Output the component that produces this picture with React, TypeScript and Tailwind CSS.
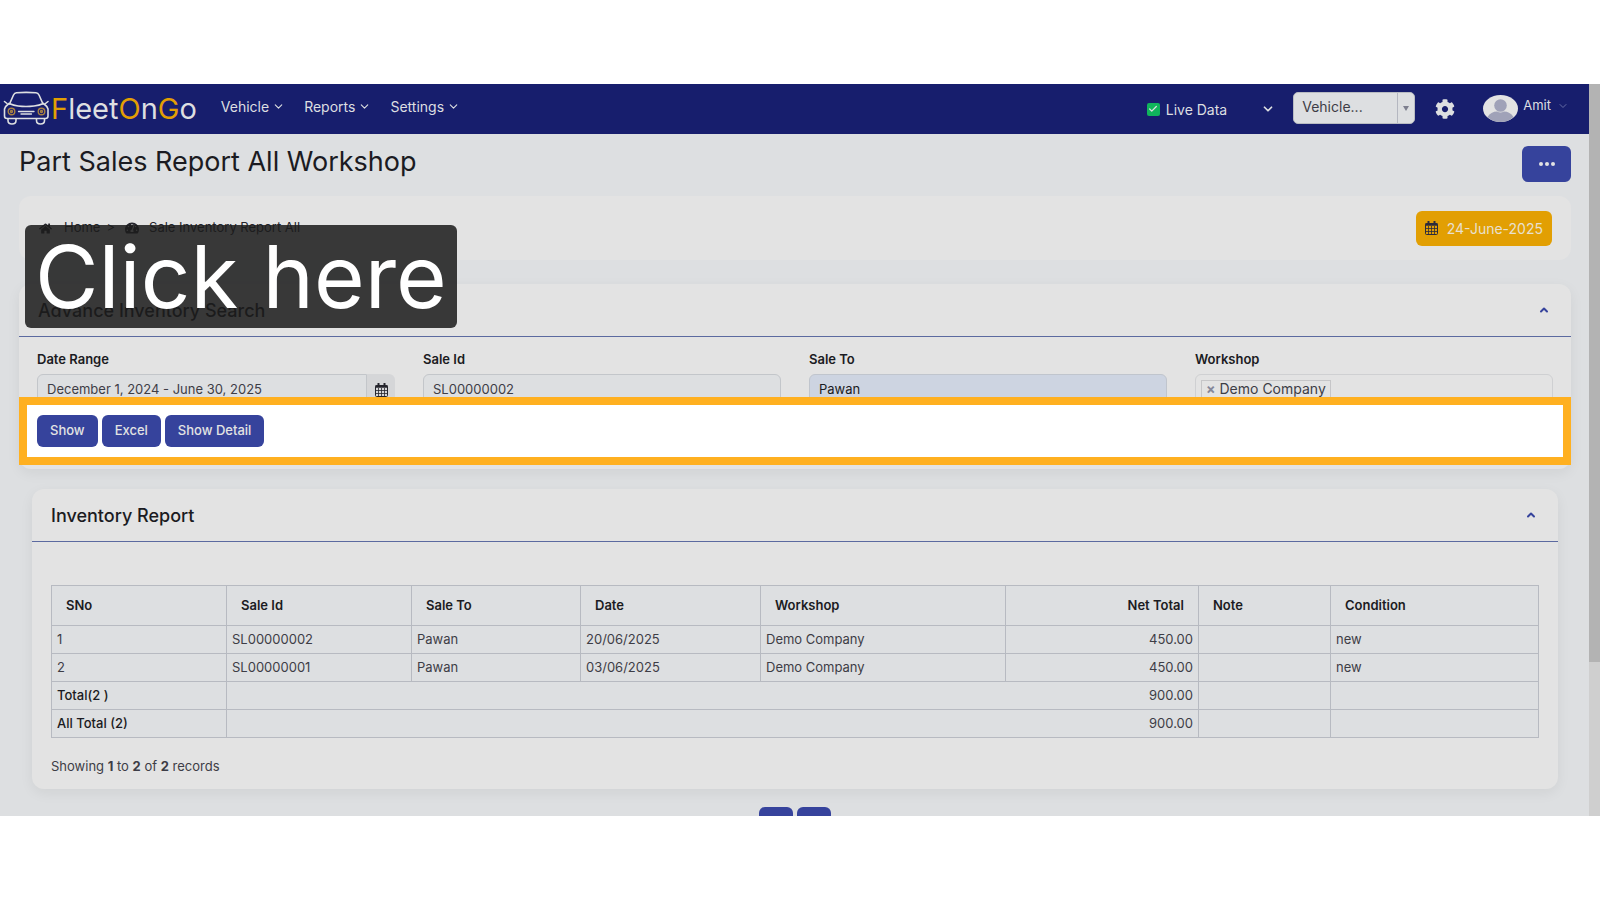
import type { ReactNode } from "react";
import { Check, ChevronDown, ChevronUp } from "lucide-react";
import { FaCog, FaHome, FaTachometerAlt } from "react-icons/fa";

type SaleRow = {
  sno: number;
  saleId: string;
  saleTo: string;
  date: string;
  workshop: string;
  netTotal: string;
  note: string;
  condition: string;
};

const rows: SaleRow[] = [
  { sno: 1, saleId: "SL00000002", saleTo: "Pawan", date: "20/06/2025", workshop: "Demo Company", netTotal: "450.00", note: "", condition: "new" },
  { sno: 2, saleId: "SL00000001", saleTo: "Pawan", date: "03/06/2025", workshop: "Demo Company", netTotal: "450.00", note: "", condition: "new" },
];

const totals = [
  { label: "Total(2 )", value: "900.00" },
  { label: "All Total (2)", value: "900.00" },
];

const columns = [
  { title: "SNo", className: "w-[175px] text-left" },
  { title: "Sale Id", className: "w-[185px] text-left" },
  { title: "Sale To", className: "w-[169px] text-left" },
  { title: "Date", className: "w-[180px] text-left" },
  { title: "Workshop", className: "w-[245px] text-left" },
  { title: "Net Total", className: "w-[193px] text-right" },
  { title: "Note", className: "w-[132px] text-left" },
  { title: "Condition", className: "text-left" },
];

const menus = ["Vehicle", "Reports", "Settings"];

export default function App() {
  return (
    <div className="flex h-screen flex-col bg-white py-[84px] font-['Inter',sans-serif] text-[13px] text-[#3d3d46]">
      <div className="flex min-h-0 flex-1">
        <div className="flex min-w-0 flex-1 flex-col overflow-hidden bg-[#dddfe1]">
          <Header />
          <main className="flex-1 pr-[18px] pl-[19px]">
            <div className="flex items-start justify-between pt-3">
              <h1 className="text-[27px] leading-8 text-[#1b1b22]">Part Sales Report All Workshop</h1>
              <button aria-label="More actions" className="flex h-9 w-[49px] items-center justify-center gap-[2px] rounded-md bg-[#36439c]">
                <i className="size-1 rounded-full bg-[#e3e3e3]" />
                <i className="size-1 rounded-full bg-[#e3e3e3]" />
                <i className="size-1 rounded-full bg-[#e3e3e3]" />
              </button>
            </div>
            <Breadcrumbs />
            <SearchPanel />
            <ReportPanel />
            <div className="mt-[18px] flex justify-center gap-1">
              <button aria-label="Previous page" className="h-8 w-[34px] rounded-md bg-[#36439c]" />
              <button aria-label="Next page" className="h-8 w-[34px] rounded-md bg-[#36439c]" />
            </div>
          </main>
        </div>
        <div className="w-[11px] bg-[#cfcfcf]">
          <div className="h-[79%] bg-[#b3b3b3]" />
        </div>
      </div>
    </div>
  );
}

function Header() {
  return (
    <header className="flex h-[50px] shrink-0 items-center bg-[#171e6d] pr-5 text-[#dddfe1]">
      <a href="#" className="flex items-center pl-[3px]">
        <CarLogo />
        <span className="text-[29px] leading-8">
          <span className="text-[#e29f03]">F</span>leet<span className="text-[#e29f03]">O</span>n<span className="text-[#e29f03]">G</span>o
        </span>
      </a>
      <nav className="ml-6 flex gap-[19px] pb-[6px]">
        {menus.map((menu) => (
          <button key={menu} className="flex items-center gap-[3px] text-[14px]">
            {menu}
            <ChevronDown size={13} strokeWidth={2} />
          </button>
        ))}
      </nav>
      <div className="ml-auto flex items-center pb-[2px]">
        <button className="flex items-center gap-[6px] pt-[2px] text-[14px]">
          <span className="flex size-[13px] items-center justify-center rounded-[2px] bg-[#10b45c]">
            <Check size={10} strokeWidth={3} />
          </span>
          Live Data
          <ChevronDown size={14} strokeWidth={3} className="ml-7" />
        </button>
        <button className="ml-[18px] flex h-8 w-[122px] items-stretch rounded-[5px] border border-[#b9bcc2] bg-[#dddfe1] text-[#3d3d46]">
          <span className="flex flex-1 items-center pb-1 pl-2 text-[14px]">Vehicle...</span>
          <span className="flex w-[17px] items-center justify-center border-l border-[#b4b7c0]">
            <i className="border-x-[3px] border-t-[5px] border-x-transparent border-t-[#7d7f8e]" />
          </span>
        </button>
        <button aria-label="Preferences" className="ml-5 pt-[2px]">
          <FaCog size={20} />
        </button>
        <button className="ml-7 flex items-center text-[13px]">
          <Avatar />
          <span className="ml-[5px] pb-1">Amit</span>
          <ChevronDown size={12} strokeWidth={2} className="mb-1 ml-[6px] text-[#666da5]" />
        </button>
      </div>
    </header>
  );
}

function CarLogo() {
  return (
    <svg width="48" height="36" viewBox="0 0 48 36" fill="none" stroke="#dddfe1" strokeWidth="1.6" strokeLinecap="round" strokeLinejoin="round">
      <path d="M6.500 13 10.500 4Q11.500 2 13.500 1.800Q23 1 33 1.800Q35 2 36 4L40 13" />
      <path d="M6 12.500Q11 14.500 15 15Q23 16 31 15Q36 14.500 40.500 12.500" />
      <path d="M6 12.500Q2.500 15 1.500 18V25Q1.500 27.500 4 27.500H42.500Q45 27.500 45 25V18Q44 15 40.500 12.500" />
      <path d="M4 12.500 1.500 10.500M42.500 12.500 45 10.500" />
      <path d="M5 28V29.500Q5 33 9 33Q13 33 13 29.500V28M33.500 28V29.500Q33.500 33 37.500 33Q41.500 33 41.500 29.500V28" />
      <path d="M15.500 20.500H31M18 23H28.500" strokeWidth="1.300" />
      <g stroke="#a98243" strokeWidth="1.400">
        <circle cx="8.500" cy="20.500" r="3.300" />
        <circle cx="8.500" cy="20.500" r="1" />
        <circle cx="38.500" cy="20.500" r="3.300" />
        <circle cx="38.500" cy="20.500" r="1" />
      </g>
    </svg>
  );
}

function Avatar() {
  return (
    <svg width="35" height="27" viewBox="0 0 35 27" className="overflow-hidden rounded-[50%]">
      <rect width="35" height="27" fill="#e3e3e3" />
      <circle cx="17.500" cy="10.500" r="6.300" fill="#a0a2b8" />
      <path d="M4.500 22Q8 16.500 14 16.500Q17.500 18.500 21 16.500Q27 16.500 30.500 22L24 27H11Z" fill="#a0a2b8" />
    </svg>
  );
}

function CalendarIcon({ className }: { className?: string }) {
  return (
    <svg width="13" height="14" viewBox="0 0 13 14" fill="none" stroke="currentColor" className={className}>
      <rect x="0.500" y="2.500" width="12" height="11" rx="1" />
      <path d="M0.500 3.500H12.500" strokeWidth="2.500" />
      <path d="M3.500 0.500V3M9.500 0.500V3" strokeWidth="2" strokeLinecap="round" />
      <path d="M3.500 5V13.500M6.500 5V13.500M9.500 5V13.500M0.500 7.500H12.500M0.500 10.500H12.500" strokeWidth="0.800" />
    </svg>
  );
}

function Breadcrumbs() {
  return (
    <div className="relative mt-[14px] flex h-16 items-center justify-between rounded-xl bg-[#e3e3e3] pr-[19px] pl-5">
      <nav className="flex items-center text-[13px] text-[#25252c]">
        <FaHome size={13} />
        <a href="#" className="ml-3">Home</a>
        <span className="mx-[6px]">&gt;</span>
        <FaTachometerAlt size={14} className="ml-1" />
        <a href="#" className="ml-[10px]">Sale Inventory Report All</a>
      </nav>
      <button className="flex h-[35px] items-center gap-[9px] rounded-md bg-[#e29f03] px-[9px] text-[14px] text-[#e8e0d0]">
        <CalendarIcon className="text-[#2b2b3c]" />
        24-June-2025
      </button>
      <div className="absolute top-[29px] left-[6px] z-20 rounded-md bg-[#1c1c1c]/86 px-[10px] text-[87px] leading-[103px] whitespace-nowrap text-white">
        Click here
      </div>
    </div>
  );
}

function PanelHeader({ title }: { title: string }) {
  return (
    <div className="flex h-[53px] items-center justify-between border-b border-[#5c6aa0] px-[19px]">
      <h2 className="text-[18px] font-medium text-[#1b1b22]">{title}</h2>
      <button aria-label={`Collapse ${title}`} className="pr-[2px] text-[#36439c]">
        <ChevronUp size={12} strokeWidth={4} />
      </button>
    </div>
  );
}

function Field({ id, label, children }: { id: string; label: string; children: ReactNode }) {
  return (
    <div>
      <label htmlFor={id} className="block leading-5 font-semibold text-[#1b1b22]">{label}</label>
      <div className="mt-[5px] flex h-[31px]">{children}</div>
    </div>
  );
}

function SearchPanel() {
  return (
    <section className="mt-6 rounded-xl bg-[#e3e3e3] pb-1 shadow-[0_4px_14px_rgba(0,0,0,0.06)]">
      <PanelHeader title="Advance Inventory Search" />
      <div className="grid grid-cols-4 gap-7 px-[18px] pt-3">
        <Field id="range" label="Date Range">
          <input id="range" defaultValue="December 1, 2024 - June 30, 2025" className="min-w-0 flex-1 rounded-l-md border border-[#c3c6ca] bg-[#dddfe1] px-[9px]" />
          <button aria-label="Open calendar" className="flex w-7 items-center justify-center rounded-r-md bg-[#d5d6d8] text-[#25252c]">
            <CalendarIcon />
          </button>
        </Field>
        <Field id="saleId" label="Sale Id">
          <input id="saleId" defaultValue="SL00000002" className="w-full rounded-md border border-[#c3c6ca] bg-[#dddfe1] px-[9px]" />
        </Field>
        <Field id="saleTo" label="Sale To">
          <input id="saleTo" defaultValue="Pawan" className="w-full rounded-md border border-[#c0c5cd] bg-[#cdd4e1] px-[9px] text-[#1b1b22]" />
        </Field>
        <Field id="workshop" label="Workshop">
          <button id="workshop" className="flex w-full items-start rounded-md border border-[#cfd0d2] p-[5px]">
            <span className="flex h-6 items-start gap-1 border border-[#c6c6c8] px-1 text-[14px] leading-4">
              <b className="text-[#85879a]">×</b>
              Demo Company
            </span>
          </button>
        </Field>
      </div>
      {/* highlighted action row, sits over the lower edge of the inputs */}
      <div className="relative z-10 -mt-2 flex h-[68px] items-center gap-1 border-8 border-[#ffb020] bg-white px-[10px]">
        {["Show", "Excel", "Show Detail"].map((action) => (
          <button key={action} className="h-8 rounded-md bg-[#36439c] px-[13px] font-medium text-[#e3e3e3]">
            {action}
          </button>
        ))}
      </div>
    </section>
  );
}

function ReportPanel() {
  return (
    <section className="mx-[13px] mt-5 rounded-xl bg-[#e3e3e3] pb-[13px] shadow-[0_4px_14px_rgba(0,0,0,0.06)]">
      <PanelHeader title="Inventory Report" />
      <div className="px-[19px] pt-[43px]">
        <table className="w-full table-fixed border-collapse bg-[#dddfe1]">
          <thead>
            <tr className="h-10">
              {columns.map((column) => (
                <th key={column.title} className={`border border-[#b7bac1] px-[14px] font-semibold text-[#1b1b22] ${column.className}`}>
                  {column.title}
                </th>
              ))}
            </tr>
          </thead>
          <tbody>
            {rows.map((row) => (
              <tr key={row.sno} className="h-7">
                <Cell>{row.sno}</Cell>
                <Cell>{row.saleId}</Cell>
                <Cell>{row.saleTo}</Cell>
                <Cell>{row.date}</Cell>
                <Cell>{row.workshop}</Cell>
                <Cell right>{row.netTotal}</Cell>
                <Cell>{row.note}</Cell>
                <Cell>{row.condition}</Cell>
              </tr>
            ))}
            {totals.map((total) => (
              <tr key={total.label} className="h-7">
                <th className="border border-[#b7bac1] px-[5px] text-left font-medium text-[#1b1b22]">{total.label}</th>
                <Cell right span={5}>{total.value}</Cell>
                <Cell />
                <Cell />
              </tr>
            ))}
          </tbody>
        </table>
        <p className="mt-[18px] leading-5">
          Showing <b>1</b> to <b>2</b> of <b>2</b> records
        </p>
      </div>
    </section>
  );
}

function Cell({ children, right, span }: { children?: ReactNode; right?: boolean; span?: number }) {
  return (
    <td colSpan={span} className={`border border-[#b7bac1] px-[5px] ${right ? "text-right" : "text-left"}`}>
      {children}
    </td>
  );
}
